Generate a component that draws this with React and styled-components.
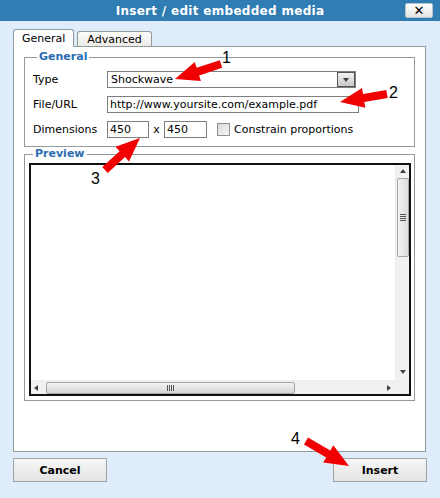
import styled, { createGlobalStyle } from "styled-components";

const GlobalStyle = createGlobalStyle`
  html, body {
    margin: 0;
    padding: 0;
    background: #dfedfa;
  }
  body {
    font-family: "DejaVu Sans", Verdana, sans-serif;
    font-size: 11px;
    color: #000;
  }
`;

const Window = styled.div`
  position: relative;
  width: 440px;
  height: 498px;
  display: flex;
  flex-direction: column;
  background: #dfedfa;
  overflow: hidden;
`;

const TitleBar = styled.div`
  height: 21px;
  flex-shrink: 0;
  display: grid;
  grid-template-columns: 1fr auto 1fr;
  align-items: center;
  background: #2f7db3;
`;

const Title = styled.div`
  grid-column: 2;
  color: #fff;
  font-weight: bold;
  font-size: 12px;
  letter-spacing: 0.3px;
`;

const CloseButton = styled.div`
  grid-column: 3;
  justify-self: end;
  margin-right: 7px;
  width: 26px;
  height: 13px;
  display: flex;
  align-items: center;
  justify-content: center;
  border: 1px solid #b8c4cc;
  border-radius: 2px;
  background: linear-gradient(#ffffff, #e4e4e4);
  font-weight: bold;
  font-size: 13px;
  line-height: 1;
  color: #000;
`;

const Body = styled.div`
  flex: 1;
  display: flex;
  flex-direction: column;
  padding: 8px 14px 0 13px;
`;

const Tabs = styled.div`
  display: flex;
  align-items: flex-end;
  gap: 3px;
  height: 17px;
  position: relative;
  z-index: 1;
`;

const Tab = styled.div`
  padding: 0 ${(p) => (p.$active ? "8px" : "9px")};
  display: flex;
  align-items: center;
  border: 1px solid #919b9c;
  border-bottom: ${(p) => (p.$active ? "1px solid #fff" : "none")};
  border-radius: 3px 3px 0 0;
  background: ${(p) => (p.$active ? "#fff" : "linear-gradient(#fbfbfa, #ecebe6)")};
  box-sizing: border-box;
  margin-bottom: ${(p) => (p.$active ? "-1px" : "0")};
  height: ${(p) => (p.$active ? "18px" : "15px")};
`;

const Panel = styled.div`
  height: 406px;
  box-sizing: border-box;
  border: 1px solid #919b9c;
  background: #fff;
  padding: 3px 10px 0 10px;
  display: flex;
  flex-direction: column;
`;

const Group = styled.fieldset`
  margin: 0;
  padding: ${(p) => p.$pad};
  border: 1px solid #919b9c;
  min-width: 0;
`;

const Legend = styled.legend`
  color: #2b6cb3;
  font-weight: bold;
  font-size: 11px;
  padding: 0 2px;
  margin-left: 4px;
  line-height: 14px;
`;

const FormGrid = styled.div`
  display: grid;
  grid-template-columns: 74px 1fr;
  row-gap: 8px;
  align-items: center;
`;

const Label = styled.span`
  white-space: nowrap;
`;

const Select = styled.div`
  width: 249px;
  height: 17px;
  box-sizing: border-box;
  border: 1px solid #7f7f7f;
  display: flex;
  align-items: stretch;
  background: #fff;
`;

const SelectValue = styled.div`
  flex: 1;
  padding-left: 3px;
  display: flex;
  align-items: center;
`;

const DropButton = styled.div`
  width: 16px;
  border: 1px solid #555;
  background: linear-gradient(#f2f2f2, #c9c9c9);
  display: flex;
  align-items: center;
  justify-content: center;
`;

const TextInput = styled.div`
  width: ${(p) => p.$w}px;
  height: 17px;
  box-sizing: border-box;
  border: 1px solid #7f7f7f;
  padding-left: 2px;
  display: flex;
  align-items: center;
  background: #fff;
`;

const DimRow = styled.div`
  display: flex;
  align-items: center;
`;

const Times = styled.span`
  width: 15px;
  text-align: center;
`;

const Checkbox = styled.div`
  width: 13px;
  height: 13px;
  box-sizing: border-box;
  border: 1px solid #8e8f8f;
  background: linear-gradient(135deg, #d8d8d8, #f6f6f6);
  margin: 0 4px 0 10px;
`;

const Frame = styled.div`
  height: 233px;
  box-sizing: border-box;
  border: 2px solid #111;
  display: grid;
  grid-template-columns: 1fr 14px;
  grid-template-rows: 1fr 14px;
  background: #fff;
`;

const VScroll = styled.div`
  background: #f1f1f1;
  border-left: 1px solid #ededed;
  display: flex;
  flex-direction: column;
  align-items: center;
  padding: 4px 0 0;
`;

const HScroll = styled.div`
  background: #f1f1f1;
  border-top: 1px solid #ededed;
  display: flex;
  align-items: center;
  padding: 0 4px 0 3px;
`;

const Corner = styled.div`
  background: #f0f0f0;
`;

const ArrowGlyph = styled.div`
  width: 0;
  height: 0;
  border: 3px solid transparent;
  ${(p) => p.$dir === "up" && "border-bottom: 4px solid #404040; border-top: 0;"}
  ${(p) => p.$dir === "down" && "border-top: 4px solid #404040; border-bottom: 0;"}
  ${(p) => p.$dir === "left" && "border-right: 4px solid #404040; border-left: 0;"}
  ${(p) => p.$dir === "right" && "border-left: 4px solid #404040; border-right: 0;"}
`;

const VThumb = styled.div`
  width: 12px;
  height: 79px;
  margin-top: 5px;
  box-sizing: border-box;
  border: 1px solid #a6a6a6;
  border-radius: 2px;
  background: linear-gradient(90deg, #f3f3f3, #dcdcdc);
  display: flex;
  align-items: center;
  justify-content: center;
`;

const HThumb = styled.div`
  width: 249px;
  height: 12px;
  margin-left: 8px;
  box-sizing: border-box;
  border: 1px solid #a6a6a6;
  border-radius: 2px;
  background: linear-gradient(#f3f3f3, #d6d6d6);
  display: flex;
  align-items: center;
  justify-content: center;
`;

const Grip = styled.div`
  display: flex;
  flex-direction: ${(p) => (p.$vertical ? "column" : "row")};
  gap: 1px;
  & > span {
    display: block;
    background: #555;
    width: ${(p) => (p.$vertical ? "6px" : "1px")};
    height: ${(p) => (p.$vertical ? "1px" : "6px")};
  }
`;

const Spacer = styled.div`
  flex: 1;
`;

const BottomGap = styled.div`
  height: 6px;
`;

const Footer = styled.div`
  display: flex;
  justify-content: space-between;
  margin: 6px -1px 0 0;
`;

const Button = styled.div`
  width: 94px;
  height: 24px;
  box-sizing: border-box;
  border: 1px solid #a3a3a3;
  background: linear-gradient(#f7f7f7, #e3e3e3);
  display: flex;
  align-items: center;
  justify-content: center;
  font-weight: bold;
  font-size: 11px;
`;

const Annotations = styled.svg`
  position: absolute;
  left: 0;
  top: 0;
  pointer-events: none;
`;

const Marker = styled.span`
  position: absolute;
  left: ${(p) => p.$x}px;
  top: ${(p) => p.$y}px;
  font-family: "Liberation Sans", Arial, sans-serif;
  font-size: 16px;
  line-height: 1;
  color: #000;
`;

function arrowPoints([x1, y1], [x2, y2], shaft = 8, head = 20, headLen = 24) {
  const len = Math.hypot(x2 - x1, y2 - y1);
  const ux = (x2 - x1) / len;
  const uy = (y2 - y1) / len;
  const px = -uy;
  const py = ux;
  const bx = x2 - ux * headLen;
  const by = y2 - uy * headLen;
  const pt = (x, y, k) => `${(x + px * k).toFixed(1)},${(y + py * k).toFixed(1)}`;
  return [
    pt(x1, y1, shaft / 2),
    pt(bx, by, shaft / 2),
    pt(bx, by, head / 2),
    `${x2},${y2}`,
    pt(bx, by, -head / 2),
    pt(bx, by, -shaft / 2),
    pt(x1, y1, -shaft / 2),
  ].join(" ");
}

const arrows = [
  { from: [221, 64], to: [175, 79] },
  { from: [387, 94], to: [340, 102] },
  { from: [105, 170], to: [140, 138] },
  { from: [306, 441], to: [349, 466] },
];

const markers = [
  { n: "1", x: 222, y: 50 },
  { n: "2", x: 389, y: 85 },
  { n: "3", x: 91, y: 171 },
  { n: "4", x: 291, y: 431 },
];

export default function App() {
  return (
    <Window>
      <GlobalStyle />
      <TitleBar>
        <Title>Insert / edit embedded media</Title>
        <CloseButton>✕</CloseButton>
      </TitleBar>
      <Body>
        <Tabs>
          <Tab $active>General</Tab>
          <Tab>Advanced</Tab>
        </Tabs>
        <Panel>
          <Group $pad="7px 8px 8px 8px">
            <Legend>General</Legend>
            <FormGrid>
              <Label>Type</Label>
              <Select>
                <SelectValue>Shockwave</SelectValue>
                <DropButton>
                  <ArrowGlyph $dir="down" />
                </DropButton>
              </Select>
              <Label>File/URL</Label>
              <TextInput $w={252}>http://www.yoursite.com/example.pdf</TextInput>
              <Label>Dimensions</Label>
              <DimRow>
                <TextInput $w={42}>450</TextInput>
                <Times>x</Times>
                <TextInput $w={43}>450</TextInput>
                <Checkbox />
                <span>Constrain proportions</span>
              </DimRow>
            </FormGrid>
          </Group>
          <Group $pad="2px 3px 4px 4px">
            <Legend>Preview</Legend>
            <Frame>
              <div />
              <VScroll>
                <ArrowGlyph $dir="up" />
                <VThumb>
                  <Grip $vertical>
                    <span />
                    <span />
                    <span />
                    <span />
                  </Grip>
                </VThumb>
                <Spacer />
                <ArrowGlyph $dir="down" />
                <BottomGap />
              </VScroll>
              <HScroll>
                <ArrowGlyph $dir="left" />
                <HThumb>
                  <Grip>
                    <span />
                    <span />
                    <span />
                    <span />
                  </Grip>
                </HThumb>
                <Spacer />
                <ArrowGlyph $dir="right" />
              </HScroll>
              <Corner />
            </Frame>
          </Group>
        </Panel>
        <Footer>
          <Button>Cancel</Button>
          <Button>Insert</Button>
        </Footer>
      </Body>
      <Annotations width="440" height="498" viewBox="0 0 440 498">
        {arrows.map((a, i) => (
          <polygon key={i} points={arrowPoints(a.from, a.to)} fill="#f00000" />
        ))}
      </Annotations>
      {markers.map((m) => (
        <Marker key={m.n} $x={m.x} $y={m.y}>
          {m.n}
        </Marker>
      ))}
    </Window>
  );
}
